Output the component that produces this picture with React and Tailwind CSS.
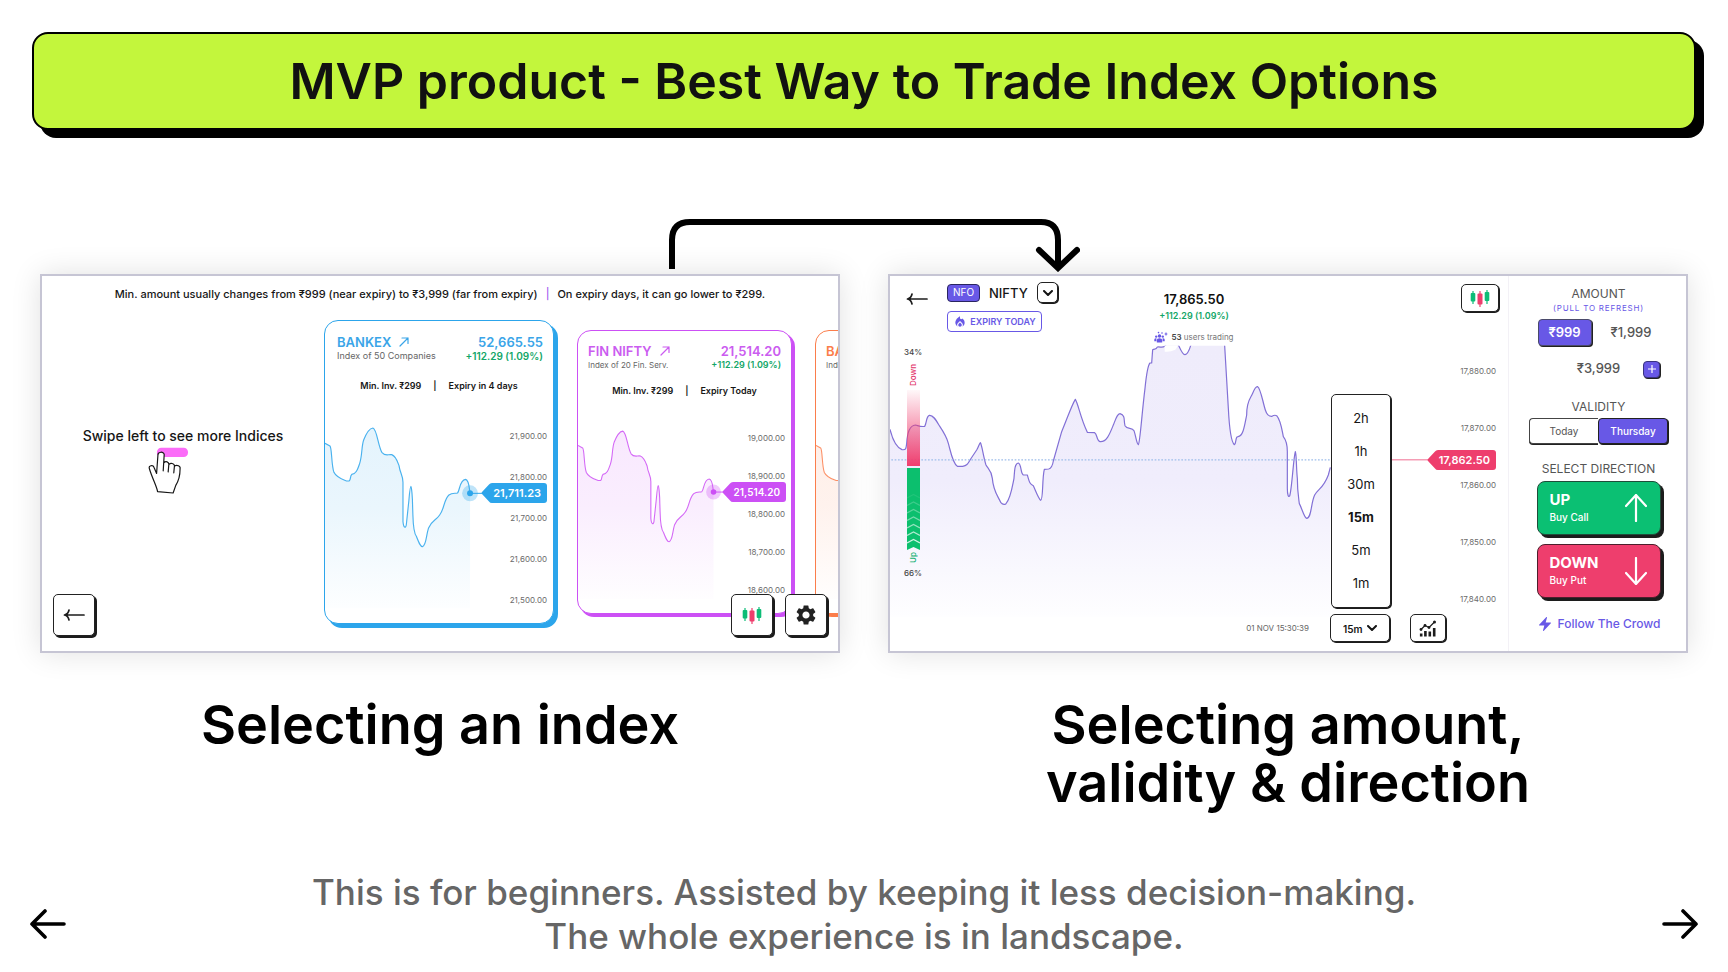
import React from "react";
import { MdSettings, MdLocalFireDepartment } from "react-icons/md";
import { HiBolt } from "react-icons/hi2";

const INDEX_LINE =
  "M43 535 L58 543 C64 548 62 600 70 622 C78 638 95 643 108 648 L116 648 C122 644 118 634 124 628 C138 627 142 612 148 595 C156 570 153 545 160 525 C168 505 176 490 188 489 C200 492 203 540 215 562 C225 575 235 567 245 569 C258 574 262 588 267 602 C270 625 279 630 279 652 L279 770 C281 790 287 790 289 780 L297 705 C299 680 301 664 303 664 C305 664 308 700 308 720 L309 750 C310 790 312 805 320 815 C328 835 332 845 338 845 C350 840 348 815 356 790 C366 765 378 768 390 750 C405 730 402 705 418 690 C428 682 436 686 444 684 C452 675 450 645 468 643 C480 645 479 670 482 685";

const NIFTY_LINE =
  "M30 493 C38 525 52 548 66 554 C80 556 78 548 80 535 C82 500 92 481 106 480 C115 482 122 486 134 484 C140 475 138 455 148 451 C160 450 168 465 178 482 C190 500 200 515 205 535 C212 560 218 595 232 604 L248 604 C262 602 264 595 272 582 L290 555 C296 545 298 535 301 533 C306 540 310 575 318 600 C324 612 334 615 337 640 C340 680 355 695 362 712 Q370 722 378 716 C392 700 396 670 402 640 C404 610 405 596 415 594 C425 598 421 625 430 630 L442 630 C448 650 448 656 460 662 C468 680 475 700 482 706 C490 706 486 640 493 613 L506 612 C515 610 518 600 520 588 L545 500 C560 465 575 420 586 403 C596 420 600 455 622 502 L644 503 C652 508 650 528 660 530 C680 532 690 505 700 480 C708 460 712 446 720 446 C738 452 730 465 735 482 C742 495 756 485 762 497 C768 515 770 538 775 539 C780 535 785 450 795 370 C800 320 804 300 810 294 L815 294 L818 254 C824 250 828 256 832 246 C840 244 846 250 854 244 L860 236 L893 236 L897 244 C905 262 910 270 915 269 C922 268 928 255 932 242 L934 234 L1033 234 L1034 242 C1038 320 1042 380 1045 430 C1048 490 1052 530 1063 539 C1070 535 1065 515 1074 515 C1090 514 1094 480 1100 450 C1100 405 1112 400 1118 385 C1124 370 1130 364 1133 365 C1142 370 1148 410 1156 435 C1162 455 1170 454 1176 454 C1182 450 1186 450 1190 452 C1202 465 1205 490 1210 515 C1218 525 1222 540 1222 560 L1222 670 C1222 692 1226 697 1229 693 C1236 670 1240 580 1246 560 C1250 570 1248 600 1252 640 C1252 680 1256 700 1258 716 C1266 730 1272 758 1280 760 C1295 760 1292 715 1304 690 C1316 670 1330 670 1345 630 L1351 607";

function BackArrow() {
  return (
    <svg viewBox="0 0 22 12" className="h-3 w-[22px]" fill="none" stroke="#1c1c1c" strokeWidth="1.7" strokeLinecap="round" strokeLinejoin="round" aria-hidden="true">
      <path d="M21 6H2M6 1C5.500 3.500 4 5.500 1.500 6C4 6.500 5.500 8.500 6 11" />
    </svg>
  );
}

function Candles() {
  return (
    <svg viewBox="0 0 20 18" className="h-[18px] w-5" aria-hidden="true">
      <path d="M3 2v13M17 1v14" stroke="#0dbd77" strokeWidth="1.200" />
      <path d="M10 2v16" stroke="#ee3e6d" strokeWidth="1.200" />
      <rect x="0.700" y="4" width="4.600" height="8.500" rx="1" fill="#0dbd77" />
      <rect x="7.500" y="4.500" width="5" height="11" rx="1" fill="#ee3e6d" />
      <rect x="14.700" y="3" width="4.600" height="9" rx="1" fill="#0dbd77" />
    </svg>
  );
}

function Crowd() {
  return (
    <svg viewBox="0 0 14 12" className="h-3 w-[14px]" fill="#6858e6" aria-hidden="true">
      <circle cx="5.500" cy="5" r="1.700" />
      <circle cx="2.200" cy="5.600" r="1.200" />
      <circle cx="8.800" cy="5.600" r="1.200" />
      <path d="M2.800 11.500V9Q2.800 7.200 5.500 7.200T8.200 9V11.500Z" />
      <path d="M0.300 10.300V8.500Q0.500 7.200 2.400 7.300V10.300ZM10.700 10.300V8.500Q10.500 7.200 8.600 7.300V10.300Z" />
      <circle cx="4.500" cy="1.600" r="0.800" />
      <circle cx="8" cy="2" r="0.800" />
      <path d="M12 0.800L12.600 2.400L14 3L12.600 3.600L12 5.200L11.400 3.600L10 3L11.400 2.400Z" />
    </svg>
  );
}

function Chevron() {
  return (
    <svg viewBox="0 0 10 6" className="h-[6px] w-[10px]" fill="none" stroke="#141414" strokeWidth="2" strokeLinecap="round" strokeLinejoin="round" aria-hidden="true">
      <path d="M1 1l4 4 4-4" />
    </svg>
  );
}

function PriceTag({ value, color, bg, size }) {
  return (
    <div className="flex h-5 items-center">
      <svg viewBox="0 0 12 20" className="h-5 w-3 flex-none" fill={color} aria-hidden="true">
        <path d="M12 0H11Q9 0 8 1.500L1 9Q0 10 1 11L8 18.500Q9 20 11 20H12Z" />
      </svg>
      <span className={`flex h-5 items-center rounded-r-[3px] pr-[6px] font-semibold text-white ${size} ${bg}`}>{value}</span>
    </div>
  );
}

const LARGE = {
  width: "w-[230px]", head: "pl-3 pr-[10px] pt-[13px]", row: "mt-[18px] pb-[23px]", step: "h-[41px]",
  area: "h-[208px]", tagPos: "right-[6px] top-[68px]", tagSize: "text-[11px]", labels: "pr-[6px]",
  subSize: "text-[9px]", changeSize: "text-[10px]",
};
const SMALL = {
  width: "w-[215px]", head: "px-[10px] pt-3", row: "mt-[14px] pb-[22px]", step: "h-[38px]",
  area: "h-[194px]", tagPos: "right-[5px] top-[63px]", tagSize: "text-[10px]", labels: "pr-[6px]",
  subSize: "text-[8px]", changeSize: "text-[9px]",
};

const INDEX_CARDS = [
  {
    ...LARGE, id: "bankex", name: "BANKEX", sub: "Index of 50 Companies", price: "52,665.55",
    change: "+112.29 (1.09%)", terms: ["Min. Inv. ₹299", "|", "Expiry in 4 days"], tag: "21,711.23",
    levels: ["21,900.00", "21,800.00", "21,700.00", "21,600.00", "21,500.00"],
    color: "#2ca5eb", text: "text-[#3aa5e8]", bg: "bg-[#2ca5eb]",
    box: "border-[#2ca5eb] shadow-[4px_4px_0_#2ca5eb]",
  },
  {
    ...SMALL, id: "finnifty", name: "FIN NIFTY", sub: "Index of 20 Fin. Serv.", price: "21,514.20",
    change: "+112.29 (1.09%)", terms: ["Min. Inv. ₹299", "|", "Expiry Today"], tag: "21,514.20",
    levels: ["19,000.00", "18,900.00", "18,800.00", "18,700.00", "18,600.00"],
    color: "#cc50f5", text: "text-[#cb5cf0]", bg: "bg-[#cc50f5]",
    box: "border-[#cc50f5] shadow-[3px_3px_0_#cc50f5]",
  },
  {
    ...SMALL, id: "bank", name: "BANK", sub: "Index", terms: [], levels: [],
    color: "#fb7d4b", text: "text-[#fb7d4b]", bg: "bg-[#fb7d4b]",
    box: "border-[#fb7d4b] shadow-[3px_3px_0_#fb7d4b]",
  },
];

function IndexCard({ card }) {
  return (
    <article className={`flex-none overflow-hidden rounded-[14px] border bg-white ${card.width} ${card.box}`}>
      <header className={`flex justify-between ${card.head}`}>
        <div>
          <h3 className={`flex items-center gap-2 whitespace-nowrap text-[13px] leading-4 font-semibold ${card.text}`}>
            {card.name}
            <svg viewBox="0 0 10 10" className="h-[10px] w-[10px]" fill="none" stroke="currentColor" strokeWidth="1.200" strokeLinecap="round" strokeLinejoin="round" aria-hidden="true">
              <path d="M1 9L9 1M3 1h6v5.500" />
            </svg>
          </h3>
          <p className={`whitespace-nowrap leading-3 text-[#666] ${card.subSize}`}>{card.sub}</p>
        </div>
        {card.price && (
          <div className="text-right">
            <p className={`text-[13px] leading-4 font-semibold ${card.text}`}>{card.price}</p>
            <p className={`whitespace-nowrap leading-3 font-semibold text-[#12a667] ${card.changeSize}`}>{card.change}</p>
          </div>
        )}
      </header>
      <p className={`flex h-3 box-content justify-center gap-3 text-[9px] leading-3 font-semibold text-[#161616] ${card.row}`}>
        {card.terms.map((t) => (
          <span key={t}>{t}</span>
        ))}
      </p>
      <div className={`relative ${card.area}`}>
        <svg viewBox="43 450 690 624" preserveAspectRatio="none" className="absolute inset-0 h-full w-full" aria-hidden="true">
          <defs>
            <linearGradient id={card.id} x1="0" y1="480" x2="0" y2="1030" gradientUnits="userSpaceOnUse">
              <stop offset="0" stopColor={card.color} stopOpacity="0.13" />
              <stop offset="0.450" stopColor={card.color} stopOpacity="0.100" />
              <stop offset="1" stopColor={card.color} stopOpacity="0.010" />
            </linearGradient>
          </defs>
          <path d={`${INDEX_LINE} V1030 H43 Z`} fill={`url(#${card.id})`} />
          <path d={INDEX_LINE} fill="none" stroke={card.color} strokeOpacity="0.850" strokeWidth="3.500" />
          <path d="M482 685H535" stroke={card.color} strokeWidth="3" />
          <circle cx="482" cy="685" r="24" fill={card.color} fillOpacity="0.300" />
          <circle cx="482" cy="685" r="9" fill={card.color} />
        </svg>
        <ul className={`relative text-right text-[8px] text-[#6b6b6b] ${card.labels}`}>
          {card.levels.map((l) => (
            <li key={l} className={`flex items-center justify-end ${card.step}`}>{l}</li>
          ))}
        </ul>
        {card.tag && (
          <div className={`absolute ${card.tagPos}`}>
            <PriceTag value={card.tag} color={card.color} bg={card.bg} size={card.tagSize} />
          </div>
        )}
      </div>
    </article>
  );
}

const SQUARE = "flex h-[42px] w-[42px] items-center justify-center rounded-[5px] border border-[#222] bg-white shadow-[2px_2px_0_#1c1c1c]";
const PANEL = "overflow-hidden border-2 border-[#c6c5d4] bg-white shadow-[0_0_28px_rgba(0,0,0,0.12)]";

function IndexPanel() {
  return (
    <section className={`relative flex flex-col ${PANEL}`} aria-label="Index selection">
      <p className="flex justify-center gap-2 pt-[10px] text-[11px] leading-4 font-medium text-[#161616]">
        <span>Min. amount usually changes from ₹999 (near expiry) to ₹3,999 (far from expiry)</span>
        <span className="text-[#a55cf0]">|</span>
        <span>On expiry days, it can go lower to ₹299.</span>
      </p>
      <div className="flex items-center pt-[18px]">
        <div className="flex w-[282px] flex-none flex-col items-center pb-6">
          <p className="text-sm leading-5 font-medium text-[#161616]">Swipe left to see more Indices</p>
          <svg viewBox="350 548 130 146" className="mr-[30px] h-[49px] w-[43px]" fill="none" aria-hidden="true">
            <rect x="380" y="552" width="94" height="28" rx="13" fill="#fb6cf8" />
            <path
              d="M383 575C382 564 401 562 402 573L401 598C407 591 416 595 416 603C421 597 433 599 433 607C441 603 452 607 450 616C450 640 446 652 437 666L429 689L382 685C380 670 366 645 357 615C354 606 368 603 371 611L379 628Z"
              fill="#fff"
            />
            <path
              d="M379 630L383 575C382 564 401 562 402 573L399 622M401 598C407 591 416 595 416 603L414 625M416 603C421 597 433 599 433 607L431 628M433 607C441 603 452 607 450 616C450 640 446 652 437 666L429 689L382 685C380 670 366 645 357 615C354 606 368 603 371 611L379 630"
              stroke="#161616" strokeWidth="3.600" strokeLinejoin="round" strokeLinecap="round"
            />
          </svg>
        </div>
        <div className="flex min-w-0 flex-1 items-center gap-[23px]">
          {INDEX_CARDS.map((c) => (
            <IndexCard key={c.id} card={c} />
          ))}
        </div>
      </div>
      <div className="absolute inset-x-[11px] bottom-[15px] flex gap-3">
        <button type="button" aria-label="Back" className={`mr-auto ${SQUARE}`}><BackArrow /></button>
        <button type="button" aria-label="Candle view" className={SQUARE}><Candles /></button>
        <button type="button" aria-label="Settings" className={SQUARE}><MdSettings className="h-6 w-6 text-[#222]" /></button>
      </div>
    </section>
  );
}

function Gauge() {
  return (
    <div className="flex w-6 flex-col items-center text-[8px] leading-3 font-medium text-[#444]">
      <span>34%</span>
      <span className="mt-[6px] rotate-180 leading-3 text-[#e2336a] [writing-mode:vertical-rl]">Down</span>
      <svg viewBox="0 0 13 162" className="mt-1 h-[162px] w-[13px]" aria-hidden="true">
        <defs>
          <linearGradient id="down" x1="0" y1="0" x2="0" y2="1">
            <stop offset="0" stopColor="#f03e6e" stopOpacity="0.040" />
            <stop offset="1" stopColor="#f03e6e" />
          </linearGradient>
        </defs>
        <rect width="13" height="76" fill="url(#down)" />
        <path d="M0 78H13V160L6.500 157L0 160Z" fill="#0cbf6e" />
        {[0, 1, 2, 3, 4, 5, 6].map((i) => (
          <path key={i} d={`M0 ${153 - i * 7.5}L6.500 ${149.5 - i * 7.5}L13 ${153 - i * 7.5}`} fill="none" stroke="#fff" strokeWidth="1.300" strokeOpacity={0.8 - i * 0.12} />
        ))}
      </svg>
      <span className="rotate-180 leading-3 text-[#10b070] [writing-mode:vertical-rl]">Up</span>
      <span className="mt-1">66%</span>
    </div>
  );
}

function NiftyChart() {
  return (
    <svg viewBox="30 33 1854 1125" preserveAspectRatio="xMinYMin meet" className="absolute inset-0 h-full w-full" aria-hidden="true">
      <defs>
        <linearGradient id="nifty" x1="0" y1="240" x2="0" y2="1060" gradientUnits="userSpaceOnUse">
          <stop offset="0" stopColor="#efecfb" />
          <stop offset="0.500" stopColor="#f0edfc" />
          <stop offset="1" stopColor="#fefeff" />
        </linearGradient>
        <clipPath id="plot"><rect x="30" y="242" width="1500" height="900" /></clipPath>
      </defs>
      <g clipPath="url(#plot)">
        <path d={`${NIFTY_LINE} V1055 H30 Z`} fill="url(#nifty)" />
        <path d={NIFTY_LINE} fill="none" stroke="#8270d6" strokeWidth="3.600" strokeLinejoin="round" />
        <path d="M854 242h40l-8 12q-16 8-32 6z" fill="#fff" />
      </g>
      <path d="M34 584.500H1360" stroke="#9dbdea" strokeWidth="3.500" strokeDasharray="5 5" />
      <path d="M1530 584.500H1660" stroke="#f06e91" strokeWidth="3" />
    </svg>
  );
}

const INTERVALS = ["2h", "1h", "30m", "15m", "5m", "1m"];
const SMALL_BOX = "rounded-[5px] border border-[#222] bg-white shadow-[1px_1px_0_#1c1c1c]";

function TradePanel() {
  return (
    <section className={`flex ${PANEL}`} aria-label="Trade ticket">
      <div className="relative flex min-w-0 flex-1">
        <NiftyChart />
        <div className="relative flex flex-1 flex-col pb-[9px]">
          <header className="flex h-[68px] items-start pt-[6px] pl-4">
            <button type="button" aria-label="Back" className="mt-[11px]"><BackArrow /></button>
            <div className="ml-[19px] w-28">
              <div className="flex items-center">
                <span className="flex h-[18px] w-[33px] items-center justify-center rounded-[4px] border border-[#2a2560] bg-[#6858e6] text-[10px] text-white">NFO</span>
                <h3 className="ml-[9px] text-[13px] leading-5 font-medium text-[#161616]">NIFTY</h3>
                <button type="button" aria-label="Choose index" className={`mr-[1px] ml-auto flex h-[21px] w-[21px] items-center justify-center ${SMALL_BOX}`}><Chevron /></button>
              </div>
              <p className="mt-2 flex h-[21px] w-[95px] items-center justify-center gap-[3px] rounded-[4px] border border-[#6858e6] text-[9px] font-semibold whitespace-nowrap text-[#6858e6]">
                <MdLocalFireDepartment className="h-[14px] w-[14px]" />
                EXPIRY TODAY
              </p>
            </div>
            <div className="ml-[87px] w-[96px] text-center whitespace-nowrap">
              <p className="pt-2 text-[13px] leading-[18px] font-semibold text-[#111]">17,865.50</p>
              <p className="text-[9px] leading-4 font-semibold text-[#12a667]">+112.29 (1.09%)</p>
              <p className="mt-[7px] flex items-center justify-center gap-[3px] text-[8px] leading-3 text-[#777]">
                <Crowd />
                <span><b className="font-semibold text-[#444]">53</b> users trading</span>
              </p>
            </div>
          </header>
          <div className="flex justify-between pr-[61px] pl-[11px]">
            <div className="pt-[2px]"><Gauge /></div>
            <ul className={`mt-[50px] w-[60px] py-[7px] ${SMALL_BOX}`} aria-label="Interval">
              {INTERVALS.map((v) => (
                <li key={v}>
                  <button type="button" className={`block h-[33px] w-full text-center text-[13px] text-[#161616] ${v === "15m" ? "font-bold" : "font-normal"}`}>{v}</button>
                </li>
              ))}
            </ul>
          </div>
          <div className="mt-auto flex items-center justify-end pr-[6px]">
            <time className="mr-[21px] text-[8px] text-[#666]">01 NOV 15:30:39</time>
            <div className={`relative h-7 w-[60px] ${SMALL_BOX}`}>
              <select aria-label="Chart interval" defaultValue="15m" className="h-full w-full appearance-none bg-transparent pl-3 text-[10px] font-semibold text-[#161616]">
                {INTERVALS.map((v) => <option key={v}>{v}</option>)}
              </select>
              <span className="pointer-events-none absolute inset-y-0 right-3 flex items-center"><Chevron /></span>
            </div>
            <button type="button" aria-label="Indicators" className={`ml-5 flex h-7 w-9 items-center justify-center ${SMALL_BOX}`}>
              <svg viewBox="0 0 18 17" className="h-[17px] w-[18px]" aria-hidden="true">
                <path d="M2.200 16.500v-3M6.400 16.500V11M10.800 16.500v-5M15.200 16.500V8" stroke="#1c1c1c" strokeWidth="2.600" />
                <path d="M2 9.500L6 5.500L10 7.500L15.500 2" stroke="#1c1c1c" strokeWidth="1.200" fill="none" />
                <circle cx="2" cy="9.500" r="1.400" fill="#1c1c1c" /><circle cx="6" cy="5.500" r="1.400" fill="#1c1c1c" />
                <circle cx="10" cy="7.500" r="1.400" fill="#1c1c1c" /><circle cx="15.500" cy="2" r="1.500" fill="#1c1c1c" />
              </svg>
            </button>
          </div>
        </div>
        <div className="relative w-14 flex-none pt-2">
          <button type="button" aria-label="Candle view" className={`ml-[9px] flex h-7 w-[38px] items-center justify-center ${SMALL_BOX}`}><Candles /></button>
          <ul className="mt-[30px] pr-3 text-right text-[8px] text-[#6b6b6b]">
            {["17,880.00", "17,870.00", "17,860.00", "17,850.00", "17,840.00"].map((l) => (
              <li key={l} className="flex h-[57px] items-center justify-end">{l}</li>
            ))}
          </ul>
          <div className="absolute top-[174px] right-3"><PriceTag value="17,862.50" color="#ee3e6d" bg="bg-[#ee3e6d]" size="text-[11px]" /></div>
        </div>
      </div>
      <aside className="flex w-[178px] flex-none flex-col items-center border-l border-[#f3f1f6] pt-[10px] pl-[2px] text-[#555]">
        <h4 className="text-xs leading-4">AMOUNT</h4>
        <p className="text-[8px] leading-3 tracking-widest text-[#6858e6]">(PULL TO REFRESH)</p>
        <div className="mt-[5px] flex items-center gap-[19px] pr-2 text-[13px] font-medium">
          <button type="button" className="h-[27px] w-[54px] rounded-[4px] border border-[#4a4a6a] bg-[#6858e6] font-semibold text-white shadow-[1px_1px_0_#222]">₹999</button>
          <button type="button">₹1,999</button>
        </div>
        <div className="mt-[14px] flex h-[18px] items-center gap-[23px] pl-10 text-[13px] font-medium">
          <button type="button">₹3,999</button>
          <button type="button" aria-label="Add amount" className="flex h-[17px] w-[17px] items-center justify-center rounded-[4px] border border-[#3a3480] bg-[#6858e6] shadow-[1px_1px_0_#222]">
            <svg viewBox="0 0 8 8" className="h-2 w-2" stroke="#fff" strokeWidth="1.200" aria-hidden="true"><path d="M4 0v8M0 4h8" /></svg>
          </button>
        </div>
        <h4 className="mt-[21px] text-xs leading-4">VALIDITY</h4>
        <div className="mt-[3px] flex h-[26px] w-[139px] items-stretch text-[10px]">
          <button type="button" className="w-[69px] rounded-l-[4px] border border-r-0 border-[#444] bg-white shadow-[0_1px_0_#222]">Today</button>
          <button type="button" className="flex-1 rounded-[4px] border border-[#222] bg-[#6858e6] font-medium text-white shadow-[1px_1px_0_#1c1c1c]">Thursday</button>
        </div>
        <h4 className="mt-[17px] text-xs leading-4">SELECT DIRECTION</h4>
        <button type="button" className="mt-1 flex h-[54px] w-[124px] items-center justify-between rounded-lg border border-[#1f4d3a] bg-[#0bc073] pr-[13px] pl-3 text-left text-white shadow-[3px_3px_0_#1c1c1c]">
          <span><b className="block text-[15px] leading-[18px] font-bold">UP</b><span className="block text-[10px] leading-4 font-medium">Buy Call</span></span>
          <svg viewBox="0 0 22 28" className="h-7 w-[22px]" fill="none" stroke="#fff" strokeWidth="2.200" strokeLinecap="round" strokeLinejoin="round" aria-hidden="true"><path d="M11 27V1M1 12L11 1L21 12" /></svg>
        </button>
        <button type="button" className="mt-[9px] flex h-[54px] w-[124px] items-center justify-between rounded-lg border border-[#4d1f2c] bg-[#ee3e6d] pr-[13px] pl-3 text-left text-white shadow-[3px_3px_0_#1c1c1c]">
          <span><b className="block text-[15px] leading-[18px] font-bold">DOWN</b><span className="block text-[10px] leading-4 font-medium">Buy Put</span></span>
          <svg viewBox="0 0 22 28" className="h-7 w-[22px]" fill="none" stroke="#fff" strokeWidth="2.200" strokeLinecap="round" strokeLinejoin="round" aria-hidden="true"><path d="M11 1V27M1 16L11 27L21 16" /></svg>
        </button>
        <a href="#crowd" className="mt-[18px] mb-[19px] flex items-center gap-[5px] text-xs leading-4 font-medium text-[#6858e6]">
          <HiBolt className="h-4 w-4" />
          Follow The Crowd
        </a>
      </aside>
    </section>
  );
}

export default function App() {
  return (
    <main className="flex min-h-screen flex-col bg-white font-['Inter',sans-serif] text-black">
      <h1 className="mx-8 mt-8 rounded-2xl border-2 border-black bg-[#c3f63c] py-[17px] text-center text-[50px] leading-[60px] font-semibold text-[#111] shadow-[8px_8px_0_#000]">
        MVP product - Best Way to Trade Index Options
      </h1>
      <svg viewBox="0 0 432 54" className="mx-auto mt-[88px] h-[54px] w-[432px]" fill="none" stroke="#000" strokeWidth="6" aria-hidden="true">
        <path d="M24 51V22Q24 4 42 4H393Q410 4 410 22V49" />
        <path d="M391 32L410 50L429 32" strokeLinecap="round" />
      </svg>
      <div className="mt-[2px] grid grid-cols-2 gap-x-12 px-10">
        <IndexPanel />
        <TradePanel />
        <h2 className="mt-[43px] text-center text-[54px] leading-[58px] font-semibold">Selecting an index</h2>
        <h2 className="mt-[43px] text-center text-[54px] leading-[58px] font-semibold">Selecting amount,<br />validity &amp; direction</h2>
      </div>
      <footer className="mt-[58px] flex items-center justify-between px-[30px] pb-3">
        <button type="button" aria-label="Previous slide" className="mt-5">
          <svg viewBox="0 0 36 30" className="h-[30px] w-9" fill="none" stroke="#000" strokeWidth="3.600" strokeLinecap="round" strokeLinejoin="round" aria-hidden="true"><path d="M34 15H2M15 2L2 15L15 28" /></svg>
        </button>
        <p className="text-center text-[35px] leading-[44px] font-medium text-[#666]">
          This is for beginners. Assisted by keeping it less decision-making.<br />The whole experience is in landscape.
        </p>
        <button type="button" aria-label="Next slide" className="mt-5">
          <svg viewBox="0 0 36 30" className="h-[30px] w-9" fill="none" stroke="#000" strokeWidth="3.600" strokeLinecap="round" strokeLinejoin="round" aria-hidden="true"><path d="M2 15H34M21 2L34 15L21 28" /></svg>
        </button>
      </footer>
    </main>
  );
}
